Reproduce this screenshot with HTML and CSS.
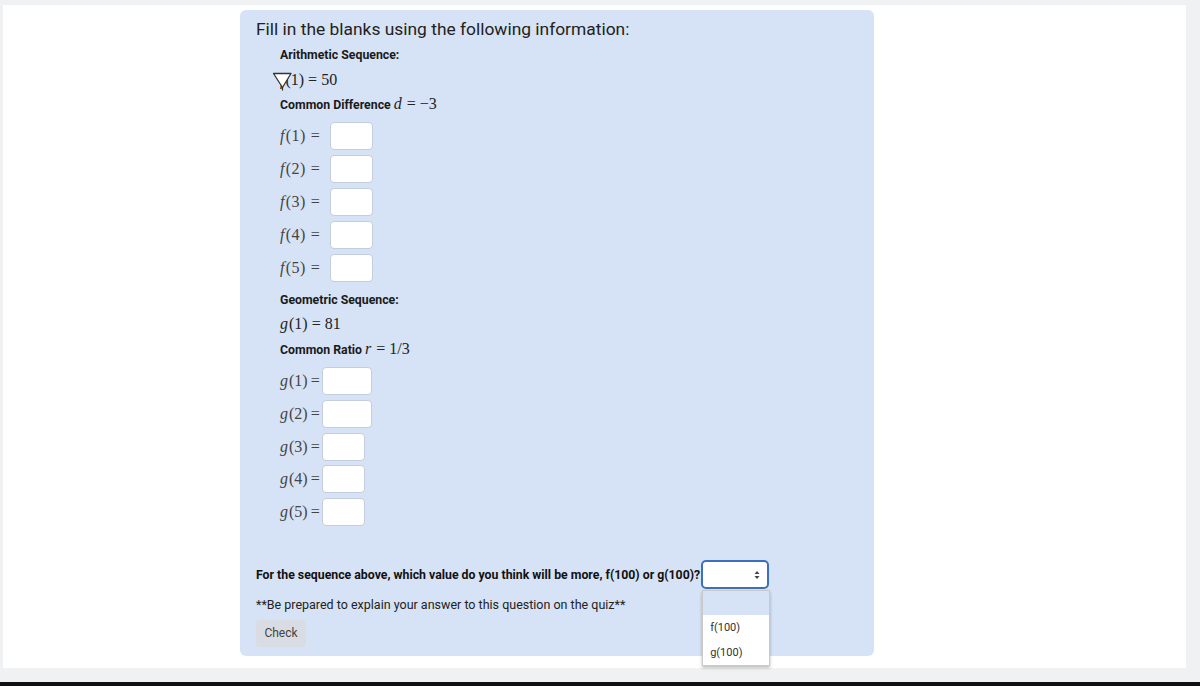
FILE: index.html
```html
<!DOCTYPE html>
<html>
<head>
<meta charset="utf-8">
<link rel="stylesheet" href="styles.css">
</head>
<body>
<div class="frame">
  <div class="card">
    <h1 class="title">Fill in the blanks using the following information:</h1>
    <div class="section">
      <div class="line label">Arithmetic Sequence:</div>
      <div class="line math cursor-line">
        <svg class="cursor" width="21" height="21" viewBox="0 0 21 21"><path d="M1.5 2.5 L19 2.5 L10.5 16.5 Z" fill="#fff" stroke="#333" stroke-width="1.3" stroke-linejoin="round"/><path d="M10.5 16.5 L10.5 19.5" stroke="#333" stroke-width="1.2"/></svg>
        <span class="it">f</span>(1)<span class="eq">=</span>50
      </div>
      <div class="line label">Common Difference <span class="math"><span class="it">d</span><span class="eq">=</span>−3</span></div>

      <div class="rows rows-f">
        <div class="row"><span class="math lbl-f"><span class="it">f</span>(1)<span class="eq">=</span></span><span class="box"></span></div>
        <div class="row"><span class="math lbl-f"><span class="it">f</span>(2)<span class="eq">=</span></span><span class="box"></span></div>
        <div class="row"><span class="math lbl-f"><span class="it">f</span>(3)<span class="eq">=</span></span><span class="box"></span></div>
        <div class="row"><span class="math lbl-f"><span class="it">f</span>(4)<span class="eq">=</span></span><span class="box"></span></div>
        <div class="row"><span class="math lbl-f"><span class="it">f</span>(5)<span class="eq">=</span></span><span class="box"></span></div>
      </div>

      <div class="line label geo">Geometric Sequence:</div>
      <div class="line math"><span class="it">g</span>(1)<span class="eq">=</span>81</div>
      <div class="line label">Common Ratio <span class="math"><span class="it">r</span><span class="eq">=</span>1/3</span></div>

      <div class="rows rows-g">
        <div class="row"><span class="math lbl-g"><span class="it">g</span>(1)<span class="eq">=</span></span><span class="box wide"></span></div>
        <div class="row"><span class="math lbl-g"><span class="it">g</span>(2)<span class="eq">=</span></span><span class="box wide"></span></div>
        <div class="row"><span class="math lbl-g"><span class="it">g</span>(3)<span class="eq">=</span></span><span class="box"></span></div>
        <div class="row"><span class="math lbl-g"><span class="it">g</span>(4)<span class="eq">=</span></span><span class="box"></span></div>
        <div class="row"><span class="math lbl-g"><span class="it">g</span>(5)<span class="eq">=</span></span><span class="box"></span></div>
      </div>
    </div>

    <div class="question">
      <span class="qtext">For the sequence above, which value do you think will be more, f(100) or g(100)?</span>
      <div class="select">
        <svg class="arrows" width="6" height="10" viewBox="0 0 6 10"><path d="M0.5 4 L3 1 L5.5 4 Z M0.5 6 L3 9 L5.5 6 Z" fill="#444"/></svg>
        <div class="dropdown">
          <div class="opt opt-empty"></div>
          <div class="opt">f(100)</div>
          <div class="opt">g(100)</div>
        </div>
      </div>
    </div>
    <div class="note">**Be prepared to explain your answer to this question on the quiz**</div>
    <div class="check">Check</div>
  </div>
</div>
<div class="bottom-bar"></div>
</body>
</html>
```
FILE: styles.css
```css
html, body {
  margin: 0;
  padding: 0;
}
body {
  background: #f0f1f3;
  width: 1200px;
  height: 686px;
  overflow: hidden;
  padding-top: 5px;
  box-sizing: border-box;
  font-family: Roboto, "Liberation Sans", Arial, sans-serif;
  color: #1f1f1f;
}
.frame {
  background: #ffffff;
  margin-left: 3px;
  width: 1183px;
  height: 663px;
  padding-top: 5px;
  box-sizing: border-box;
}
.card {
  margin-left: 237px;
  width: 634px;
  height: 646px;
  background: #d6e2f5;
  border-radius: 6px;
  padding: 9px 16px 0 16px;
  box-sizing: border-box;
}
.title {
  margin: 0;
  font-size: 17.4px;
  font-weight: 400;
  line-height: 20px;
  height: 21px;
  color: #222;
}
.section {
  margin-left: 24px;
  padding-top: 3px;
}
.line {
  height: 24.5px;
  line-height: 24px;
  white-space: nowrap;
}
.label {
  font-size: 12.3px;
  font-weight: 700;
  letter-spacing: 0;
  color: #1a1a1a;
}
.math {
  font-family: "Liberation Serif", "Times New Roman", serif;
  font-size: 16px;
  font-weight: 400;
  letter-spacing: 0;
  color: #222;
}
.eq {
  margin: 0 4px;
}
.it {
  font-style: italic;
  margin-right: 1px;
}
.cursor-line {
  position: relative;
}
.cursor {
  position: absolute;
  left: -8px;
  top: 3px;
}
.rows {
  display: flex;
  flex-direction: column;
  gap: 5px;
}
.rows-f {
  margin-top: 5px;
}
.rows-g {
  margin-top: 6px;
  gap: 4.8px;
}
.row {
  display: flex;
  align-items: center;
  height: 28px;
}
.lbl-f {
  width: 50px;
  color: #444;
  white-space: nowrap;
  letter-spacing: 0.4px;
}
.lbl-f .eq {
  margin-left: 5px;
  margin-right: 0;
}
.lbl-g {
  width: 42px;
  color: #444;
  white-space: nowrap;
}
.lbl-g .eq {
  margin-left: 3px;
  margin-right: 0;
}
.box {
  width: 43px;
  height: 28px;
  box-sizing: border-box;
  background: #fff;
  border: 1px solid #c3cddb;
  border-radius: 4px;
}
.box.wide {
  width: 50px;
}
.geo {
  margin-top: 6px;
}
.question {
  margin-top: 34px;
  display: flex;
  align-items: center;
  height: 29px;
}
.qtext {
  font-size: 12.3px;
  font-weight: 700;
  letter-spacing: 0;
  color: #111;
}
.select {
  position: relative;
  width: 68px;
  height: 29px;
  margin-left: 1px;
  box-sizing: border-box;
  background: #fff;
  border: 2px solid #3d6fc1;
  border-radius: 5px;
}
.arrows {
  position: absolute;
  right: 7px;
  top: 8px;
}
.dropdown {
  position: absolute;
  left: -1px;
  top: 28px;
  width: 66px;
  background: #fff;
  border: 1px solid #c9c9c9;
  box-shadow: 0 2px 3px rgba(0,0,0,0.25);
}
.opt {
  height: 25px;
  line-height: 25px;
  font-size: 11px;
  padding-left: 7px;
  color: #333;
}
.opt-empty {
  background: #d6e2f5;
  height: 24px;
}
.note {
  margin-top: 5px;
  height: 21px;
  line-height: 21px;
  font-size: 12.5px;
  letter-spacing: 0;
  color: #222;
}
.check {
  margin-top: 5px;
  width: 50px;
  height: 27px;
  line-height: 27px;
  text-align: center;
  background: #d9dce2;
  border-radius: 4px;
  font-size: 12px;
  color: #444;
}
.bottom-bar {
  margin-top: 14px;
  height: 4px;
  background: #111;
}
```
